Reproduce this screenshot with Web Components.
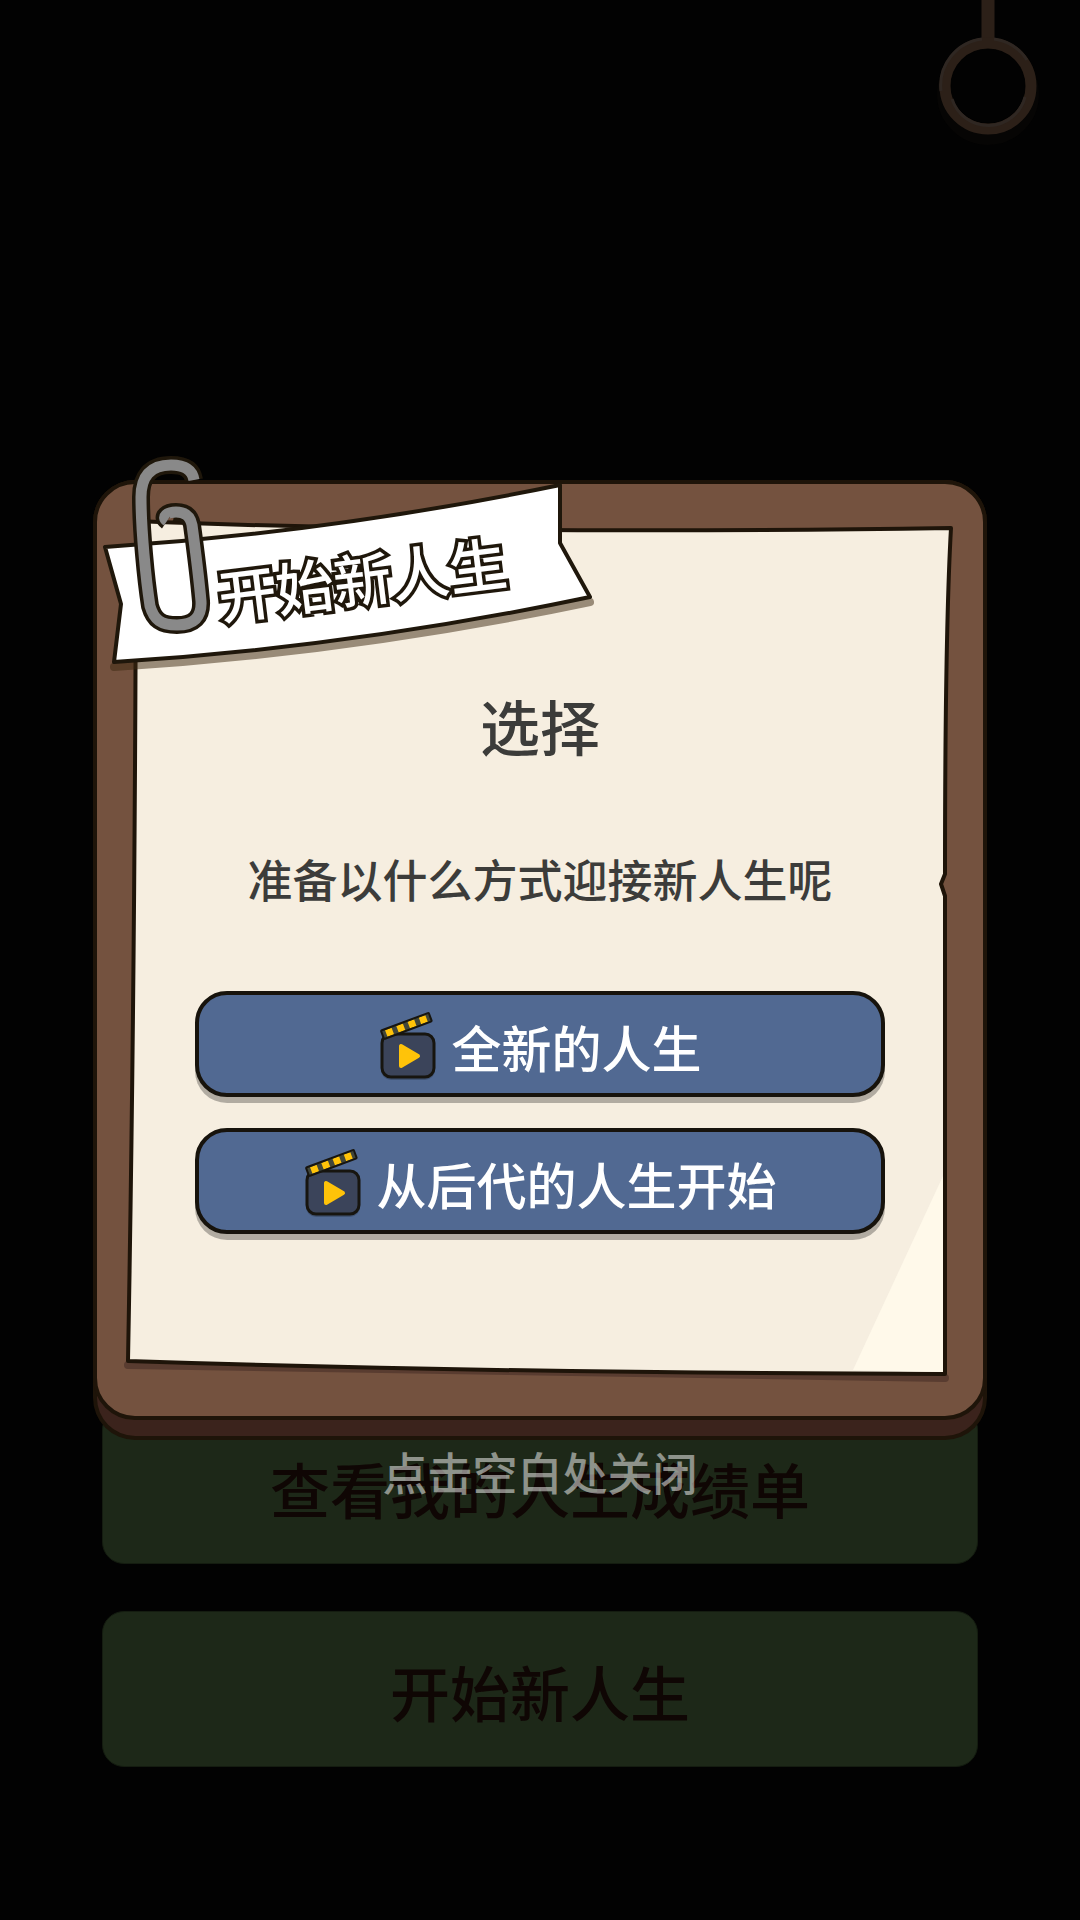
<!DOCTYPE html>
<html lang="zh-CN">
<head>
<meta charset="utf-8">
<meta name="viewport" content="width=device-width, initial-scale=1">
<title>开始新人生</title>
<style>
  body {
    margin: 0;
    background: #020202;
    font-family: "Noto Sans CJK SC", sans-serif;
    font-weight: 500;
  }
</style>
</head>
<body>
<life-scene>
  <pull-ring></pull-ring>
  <scene-button>查看我的人生成绩单</scene-button>
  <scene-button>开始新人生</scene-button>
</life-scene>

<life-dialog>
  <paper-banner slot="banner">开始新人生</paper-banner>
  <span slot="heading">选择</span>
  <span slot="message">准备以什么方式迎接新人生呢</span>
  <video-button>全新的人生</video-button>
  <video-button>从后代的人生开始</video-button>
  <span slot="hint">点击空白处关闭</span>
</life-dialog>

<script>
class BaseElement extends HTMLElement {
  connectedCallback() {
    if (this.shadowRoot) return;
    const template = document.createElement('template');
    template.innerHTML = this.constructor.template();
    this.attachShadow({ mode: 'open' });
    this.shadowRoot.appendChild(template.content.cloneNode(true));
  }
}

class LifeScene extends BaseElement {
  static template() {
    return `
      <style>
        :host {
          display: flex;
          flex-direction: column;
          gap: 47px;
          box-sizing: border-box;
          min-height: 100vh;
          padding: 0 102px 153px;
        }

        ::slotted(pull-ring) {
          align-self: flex-end;
          margin: 0 -70px auto 0;
        }
      </style>
      <slot></slot>
    `;
  }
}

class PullRing extends BaseElement {
  static template() {
    return `
      <style>
        :host { display: block; }
        svg { display: block; }
      </style>
      <svg width="120" height="150" viewBox="0 0 120 150" fill="none" aria-hidden="true">
        <circle cx="60" cy="94" r="43" stroke="#060504" stroke-width="16"/>
        <path d="M60 0V40" stroke="#2c2018" stroke-width="13"/>
        <circle cx="60" cy="86" r="43" stroke="#2c2018" stroke-width="11"/>
        <circle cx="60" cy="86" r="37" fill="#020202"/>
        <path d="M13 91A47 47 0 0 1 54 39M66 39A47 47 0 0 1 99 60" stroke="#2f2722" stroke-width="3"/>
        <path d="M24 99A38 38 0 0 0 97 97" stroke="#2f2722" stroke-width="3"/>
      </svg>
    `;
  }
}

class SceneButton extends BaseElement {
  static template() {
    return `
      <style>
        :host { display: block; }

        button {
          display: block;
          width: 100%;
          padding: 44px 0 40px;
          border: 1px solid #141c10;
          border-radius: 22px;
          background: #1d2818;
          color: #0f0604;
          font: inherit;
          font-size: 60px;
          line-height: 70px;
        }
      </style>
      <button type="button"><slot></slot></button>
    `;
  }
}

class LifeDialog extends BaseElement {
  static template() {
    return `
      <style>
        :host {
          position: absolute;
          inset: 0;
          display: grid;
          align-items: center;
          padding: 0 93px;
        }

        .board {
          position: relative;
          padding-bottom: 16px;
          border: 4px solid #1e1409;
          border-top: 0;
          border-radius: 42px;
          background: #3b231c;
        }

        .face {
          position: relative;
          margin: 0 -4px;
          padding: 205px 98px 182px;
          border: 4px solid #1e1409;
          border-radius: 42px;
          background: #74523f;
          color: #3c3c3a;
          text-align: center;
        }

        .paper {
          position: absolute;
          inset: 0;
          width: 100%;
          height: 100%;
        }

        .paper path { vector-effect: non-scaling-stroke; }

        h2,
        p {
          position: relative;
          margin: 0;
          font-weight: 500;
        }

        h2 {
          font-size: 60px;
          line-height: 72px;
        }

        .message {
          margin: 90px 0 84px;
          font-size: 45px;
          line-height: 56px;
        }

        .actions {
          position: relative;
          display: grid;
          gap: 31px;
        }

        ::slotted(paper-banner) {
          position: absolute;
          left: 3px;
          top: -25px;
        }

        .hint {
          position: absolute;
          top: 100%;
          left: 0;
          right: 0;
          margin-top: 8px;
          color: rgba(255, 255, 255, .5);
          font-size: 45px;
          line-height: 56px;
          text-align: center;
        }
      </style>
      <div class="board" role="dialog" aria-labelledby="heading">
        <div class="face">
          <svg class="paper" viewBox="0 0 886 932" preserveAspectRatio="none" aria-hidden="true">
            <path d="M31 881L848 894" fill="none" stroke="#593c30" stroke-width="8" stroke-linecap="round"/>
            <path d="M39 37Q380 51 854 44Q848 150 848 390L844 400L848 412V890Q400 889 31 877Q38 500 39 37Z"
              fill="#f6eee0" stroke="#1e1409" stroke-width="4" stroke-linejoin="round"/>
            <path d="M846 692V888L756 886Z" fill="#fff9ea"/>
          </svg>
          <h2 id="heading"><slot name="heading"></slot></h2>
          <p class="message"><slot name="message"></slot></p>
          <div class="actions"><slot></slot></div>
        </div>
        <slot name="banner"></slot>
        <p class="hint"><slot name="hint"></slot></p>
      </div>
    `;
  }
}

class PaperBanner extends BaseElement {
  static template() {
    return `
      <style>
        :host {
          display: grid;
          place-items: center;
          box-sizing: border-box;
          width: 500px;
          height: 220px;
          padding: 24px 0 0 24px;
        }

        svg {
          position: absolute;
          inset: 0;
        }

        h1 {
          position: relative;
          margin: 0;
          transform: rotate(-7deg);
          color: #fff;
          font-size: 58px;
          font-weight: 500;
          line-height: 72px;
          -webkit-text-stroke: 7px #1f170b;
          paint-order: stroke fill;
        }
      </style>
      <svg width="500" height="220" viewBox="0 0 500 220" fill="none" aria-hidden="true">
        <path d="M14 212Q252 197 490 147" stroke="#3c280f" stroke-opacity=".5" stroke-width="8" stroke-linecap="round"/>
        <path d="M5 92Q232 77 460 30V88L490 142Q252 192 14 207L21 149Z"
          fill="#fff" stroke="#1f170b" stroke-width="4" stroke-linejoin="round"/>
        <path d="M94 25C92 13 82 10 71 10C50 10 41 22 41 42C41 75 46 125 50 151C54 165 61 170 77 170C94 170 102 162 101 146C99 124 95 92 92 70C90 60 84 57 76 57C67 57 61 62 67 66"
          stroke="#1f170b" stroke-width="18" stroke-linejoin="round"/>
        <path d="M94 25C92 13 82 10 71 10C50 10 41 22 41 42C41 75 46 125 50 151C54 165 61 170 77 170C94 170 102 162 101 146C99 124 95 92 92 70C90 60 84 57 76 57C67 57 61 62 67 66"
          stroke="#898989" stroke-width="11" stroke-linejoin="round"/>
      </svg>
      <h1><slot></slot></h1>
    `;
  }
}

class VideoButton extends BaseElement {
  static template() {
    return `
      <style>
        :host { display: block; }

        button {
          display: flex;
          align-items: center;
          justify-content: center;
          gap: 16px;
          width: 100%;
          padding: 17px 0 13px;
          border: 4px solid #17130c;
          border-radius: 32px;
          background: #516992;
          box-shadow: 0 6px rgba(0, 0, 0, .28);
          color: #fff;
          font: inherit;
          font-size: 50px;
          line-height: 68px;
        }

        svg { flex: none; }
      </style>
      <button type="button">
        <svg width="57" height="68" viewBox="0 0 57 68" aria-hidden="true">
          <rect x="2" y="24" width="54" height="44" rx="10" fill="#000" fill-opacity=".2"/>
          <rect x="3" y="22" width="52" height="43" rx="9" fill="#3b445a" stroke="#17150f" stroke-width="3"/>
          <g transform="translate(1 19) rotate(-20.5)">
            <rect x="1" y="0" width="51" height="9" rx="1" fill="#414639"/>
            <path d="M5 1h7v7h-7zM17 1h7v7h-7zM29 1h7v7h-7zM41 1h7v7h-7z" fill="#ffc309"/>
            <rect x="1" y="0" width="51" height="9" rx="1" fill="none" stroke="#17150f" stroke-width="2"/>
          </g>
          <path d="M22 34V54L39 44Z" fill="#ffc309" stroke="#ffc309" stroke-width="4" stroke-linejoin="round"/>
        </svg>
        <slot></slot>
      </button>
    `;
  }
}

customElements.define('life-scene', LifeScene);
customElements.define('pull-ring', PullRing);
customElements.define('scene-button', SceneButton);
customElements.define('life-dialog', LifeDialog);
customElements.define('paper-banner', PaperBanner);
customElements.define('video-button', VideoButton);
</script>
</body>
</html>
